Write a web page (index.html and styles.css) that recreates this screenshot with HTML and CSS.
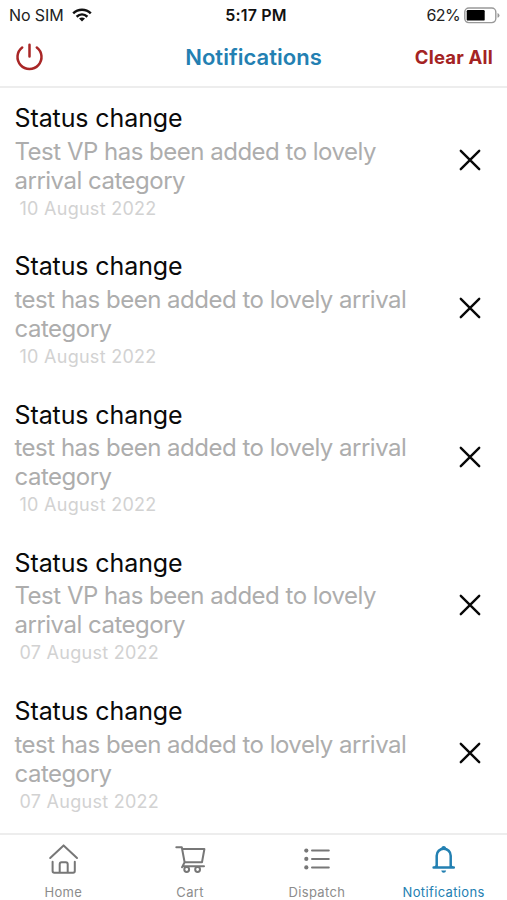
FILE: index.html
```html
<!DOCTYPE html>
<html lang="en">
<head>
<meta charset="utf-8">
<title>Notifications</title>
<link rel="stylesheet" href="styles.css">
</head>
<body>
<div class="app">
  <div class="status">
    <div class="carrier"><span class="carrier-name">No SIM</span>
      <svg class="wifi" width="20" height="14" viewBox="0 0 20 14" fill="none" stroke="#111" stroke-width="2.5"><path d="M1.2 5.4C6.2.6 13.8.6 18.8 5.4M4.6 8.7C7.8 5.8 12.2 5.8 15.4 8.7"/><path d="M10 13.6 7 10.6Q10 8.2 13 10.6Z" fill="#111" stroke="none"/></svg>
    </div>
    <div class="time">5:17 PM</div>
    <div class="power"><span class="percent">62%</span>
      <svg width="36" height="17" viewBox="0 0 36 17"><rect x=".8" y="1" width="31" height="14.600" rx="4" fill="none" stroke="#999" stroke-width="1.400"/><rect x="2.700" y="3" width="18" height="10.600" rx="1.200" fill="#000"/><path d="M33.500 6v4.800q2-.7 2-2.400t-2-2.400z" fill="#999"/></svg>
    </div>
  </div>
  <header class="header">
    <svg class="logout" width="30" height="30" viewBox="0 0 30 30" fill="none" stroke="#a92626" stroke-width="2.500" stroke-linecap="round"><path d="M8.200 5.500A12 12 0 1 0 22.800 5.500M15.500 2.800V14.400"/></svg>
    <h1 class="heading">Notifications</h1>
    <div class="clear">Clear All</div>
  </header>
  <main class="list">
    <article class="item"><div class="copy"><h2 class="title">Status change</h2><p class="message">Test VP has been added to lovely<br>arrival category</p><time class="date">10 August 2022</time></div><svg class="close" width="22" height="22" viewBox="0 0 22 22"><path d="M1.800 1.800 20.200 20.200M20.200 1.800 1.800 20.200"/></svg></article>
    <article class="item"><div class="copy"><h2 class="title">Status change</h2><p class="message">test has been added to lovely arrival<br>category</p><time class="date">10 August 2022</time></div><svg class="close" width="22" height="22" viewBox="0 0 22 22"><path d="M1.800 1.800 20.200 20.200M20.200 1.800 1.800 20.200"/></svg></article>
    <article class="item"><div class="copy"><h2 class="title">Status change</h2><p class="message">test has been added to lovely arrival<br>category</p><time class="date">10 August 2022</time></div><svg class="close" width="22" height="22" viewBox="0 0 22 22"><path d="M1.800 1.800 20.200 20.200M20.200 1.800 1.800 20.200"/></svg></article>
    <article class="item"><div class="copy"><h2 class="title">Status change</h2><p class="message">Test VP has been added to lovely<br>arrival category</p><time class="date">07 August 2022</time></div><svg class="close" width="22" height="22" viewBox="0 0 22 22"><path d="M1.800 1.800 20.200 20.200M20.200 1.800 1.800 20.200"/></svg></article>
    <article class="item"><div class="copy"><h2 class="title">Status change</h2><p class="message">test has been added to lovely arrival<br>category</p><time class="date">07 August 2022</time></div><svg class="close" width="22" height="22" viewBox="0 0 22 22"><path d="M1.800 1.800 20.200 20.200M20.200 1.800 1.800 20.200"/></svg></article>
  </main>
  <nav class="tabs">
    <div class="tab"><svg class="tab-icon" width="32" height="32" viewBox="0 0 32 32"><path d="M3.200 16 16.600 3.400 30 16M5.600 19.800V29q0 1.700 1.700 1.700H26.100q1.700 0 1.700-1.700V19.800M12.700 30.700V22.200q0-1.900 1.900-1.900h4.200q1.900 0 1.900 1.900V30.700"/></svg><span>Home</span></div>
    <div class="tab"><svg class="tab-icon" width="32" height="32" viewBox="0 0 32 32"><path d="M2.300 5.200H7.800L10.600 20.300H28L30.400 7H8.100M10.600 20.300 8.600 24.200H30M8.600 24.200 8 25.200"/><circle cx="12.700" cy="27.500" r="2.400"/><circle cx="23.600" cy="27.500" r="2.400"/></svg><span>Cart</span></div>
    <div class="tab"><svg class="tab-icon" width="32" height="32" viewBox="0 0 32 32"><path d="M11 8.600H27.800M11 16.900H27.800M11 25.400H27.800"/><g fill="#777" stroke="none"><circle cx="5.300" cy="8.600" r="2.100"/><circle cx="5.300" cy="16.900" r="2.100"/><circle cx="5.300" cy="25.400" r="2.100"/></g></svg><span>Dispatch</span></div>
    <div class="tab active"><svg class="tab-icon" width="32" height="32" viewBox="0 0 32 32"><path d="M5.600 25.600H25.800M8.700 25V13.700A7 7 0 0 1 22.700 13.700V25" stroke-width="2.500"/><path d="M5.500 25.500 9 22v3.500zM25.900 25.500 22.400 22v3.500zM13.300 6.500a2.400 2.600 0 1 1 4.800 0zM13.200 28.600h5q-.5 2.200-2.500 2.200t-2.500-2.200z" fill="#2380b2" stroke="none"/></svg><span>Notifications</span></div>
  </nav>
</div>
</body>
</html>
```
FILE: styles.css
```css
* { box-sizing: border-box; }
body { margin: 0; background: #fff; font-family: Inter, "Liberation Sans", sans-serif; }
h1, h2, p { margin: 0; }
svg { display: block; flex: none; }
.app { width: 507px; height: 900px; display: flex; flex-direction: column; overflow: hidden; }
.status { height: 30px; display: grid; grid-template-columns: 1fr auto 1fr; align-items: center; padding: 0 7px 0 9px; color: #222; font-size: 16px; white-space: nowrap; }
.carrier { display: flex; align-items: center; gap: 8px; letter-spacing: -.1px; }
.time { padding-left: 3px; font-weight: 600; color: #111; letter-spacing: .2px; }
.power { display: flex; align-items: center; justify-content: flex-end; gap: 4px; letter-spacing: -.6px; }
.header { height: 58px; display: grid; grid-template-columns: 1fr auto 1fr; align-items: center; padding: 0 14px 3px; border-bottom: 2px solid #ededed; white-space: nowrap; }
.heading { padding-top: 1px; color: #2380b2; font-size: 22px; line-height: 28px; font-weight: 600; letter-spacing: .03px; }
.clear { padding-top: 1px; color: #a42323; font-size: 18.500px; line-height: 28px; font-weight: 700; letter-spacing: .2px; text-align: right; }
.list { flex: 1; min-height: 0; padding: 15px 26px 0 14.500px; overflow: hidden; }
.item { height: 148.250px; display: flex; justify-content: space-between; white-space: nowrap; }
.title { font-size: 25px; line-height: 30px; font-weight: 400; letter-spacing: -.1px; color: #0a0a0a; }
.message { margin-top: 3.500px; font-size: 24px; line-height: 29px; letter-spacing: -.500px; color: #adadad; }
.date { display: block; padding: 1px 0 0 5px; font-size: 18px; line-height: 26px; letter-spacing: .270px; color: #d2d2d2; }
.close { margin-top: 46px; fill: none; stroke: #080808; stroke-width: 2.400px; stroke-linecap: round; }
.tabs { height: 67px; display: grid; grid-template-columns: repeat(4, 1fr); border-top: 2px solid #ededed; }
.tab { display: flex; flex-direction: column; align-items: center; padding-top: 7px; color: #8c8c8c; font-size: 13px; line-height: 18px; letter-spacing: .350px; }
.tab span { margin-top: 9px; }
.tab-icon { fill: none; stroke: #777; stroke-width: 2px; stroke-linecap: round; stroke-linejoin: round; }
.active { color: #2380b2; }
.active .tab-icon { stroke: #2380b2; }
```
